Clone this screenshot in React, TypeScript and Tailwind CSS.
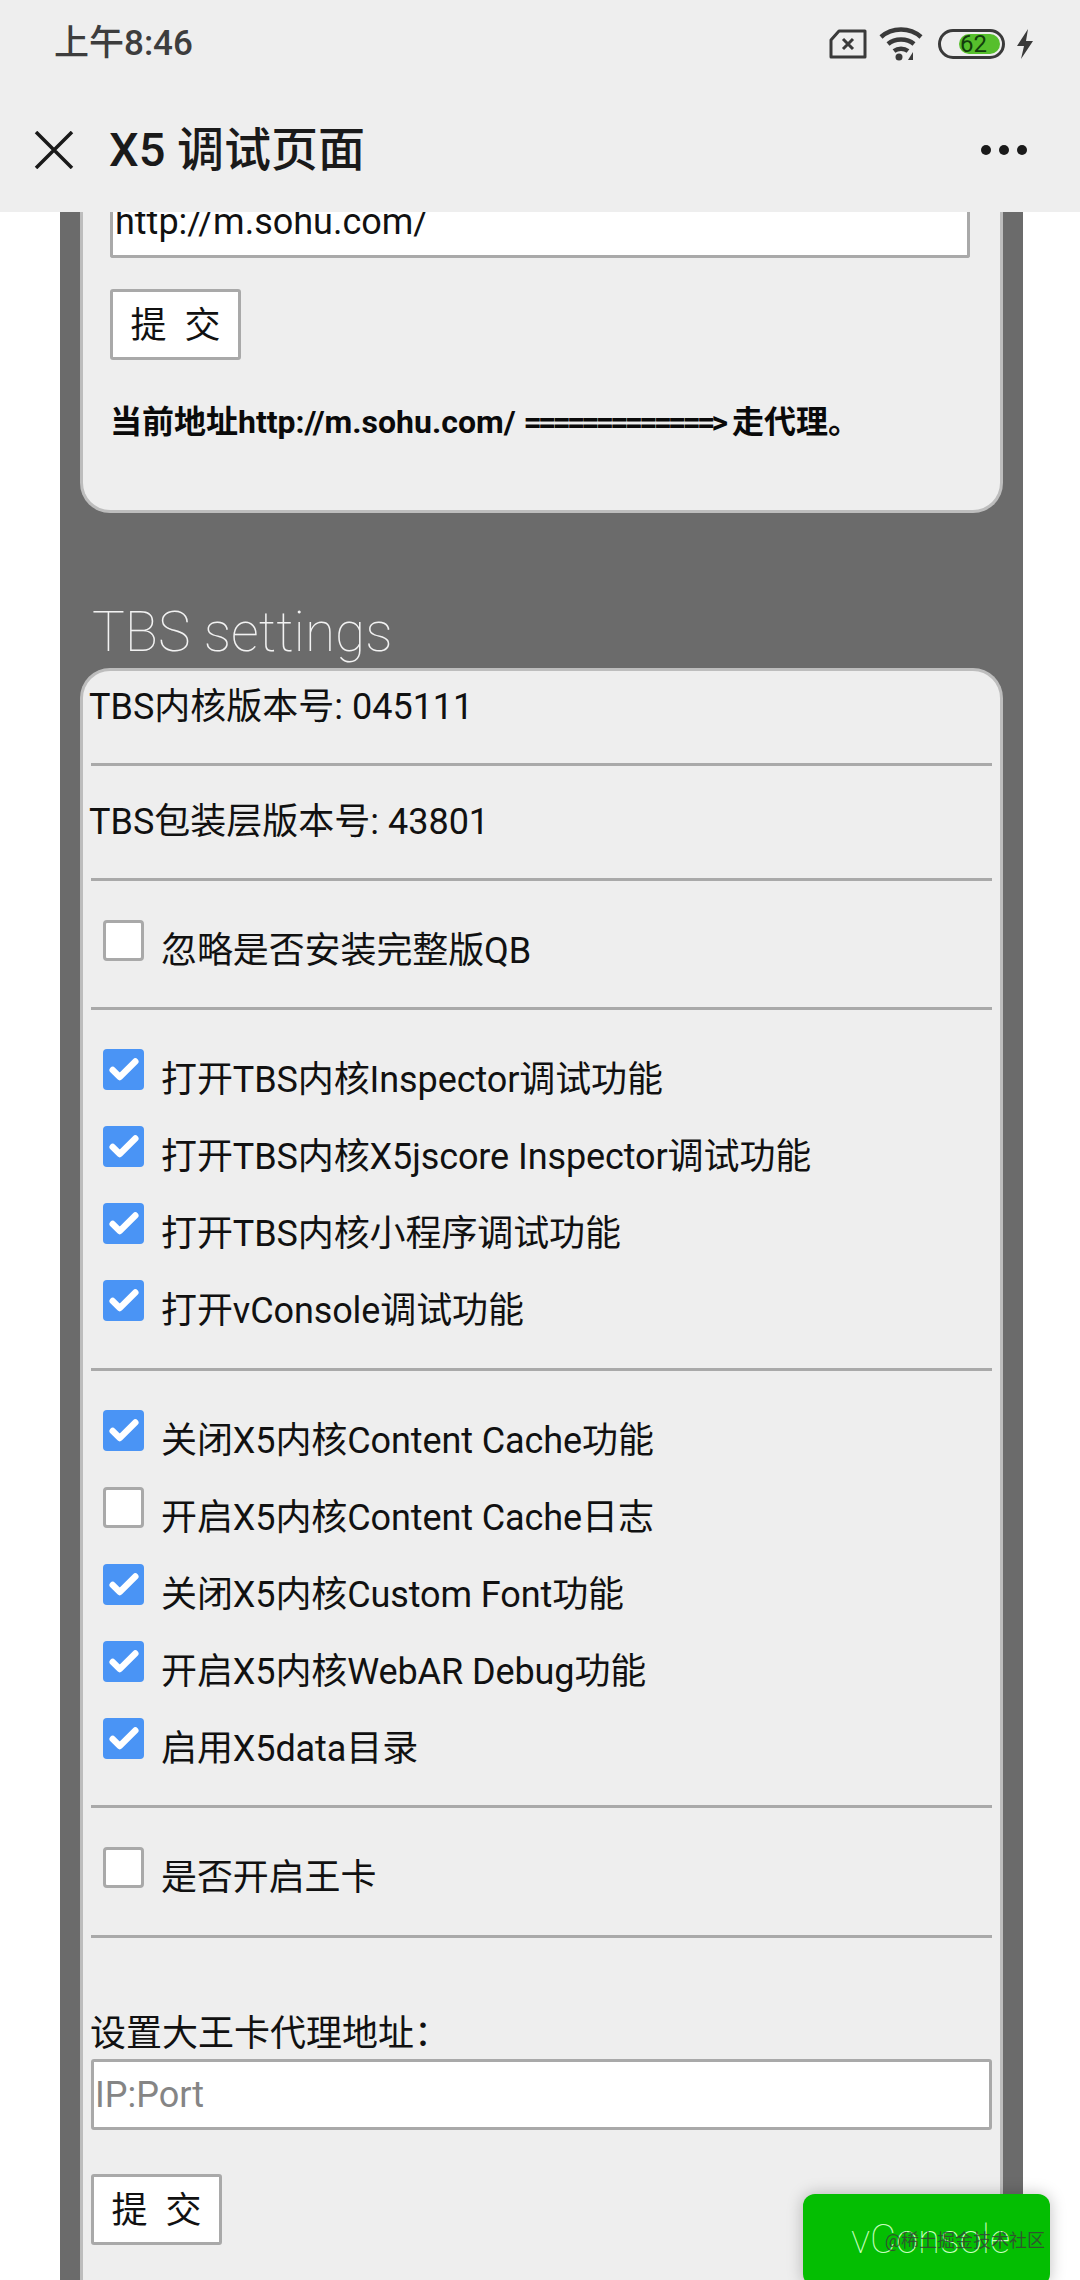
import { Check } from "lucide-react";

const fontStack = "[font-family:Roboto,'Noto_Sans_CJK_SC',sans-serif]";

const debugRows = [
    { label: '打开TBS内核Inspector调试功能', checked: true },
    { label: '打开TBS内核X5jscore Inspector调试功能', checked: true },
    { label: '打开TBS内核小程序调试功能', checked: true },
    { label: '打开vConsole调试功能', checked: true },
];

const x5Rows = [
    { label: '关闭X5内核Content Cache功能', checked: true },
    { label: '开启X5内核Content Cache日志', checked: false },
    { label: '关闭X5内核Custom Font功能', checked: true },
    { label: '开启X5内核WebAR Debug功能', checked: true },
    { label: '启用X5data目录', checked: true },
];

function CheckRow({ label, checked }: { label: string; checked: boolean }) {
    return (
        <div className="flex h-[77px] items-start pl-[12px]">
            {checked ? (
                <span className="flex h-[41px] w-[41px] shrink-0 items-center justify-center rounded-[4px] bg-[#4a94f5]">
                    <Check size={34} strokeWidth={4.5} className="text-white" />
                </span>
            ) : (
                <span className="h-[41px] w-[41px] shrink-0 rounded-[4px] border-[3px] border-[#a9a9a9] bg-white" />
            )}
            <span className="ml-[17px] mt-[7px] text-[36px] leading-[48px] tracking-[-0.1px] whitespace-nowrap text-[#111]">{label}</span>
        </div>
    );
}

function SubmitButton() {
    return (
        <button className="flex h-[71px] w-[131px] items-center justify-center gap-[18px] rounded-[3px] border-[3px] border-[#a9a9a9] bg-white pt-[2px] text-[36px] text-[#111]">
            <span>提</span>
            <span>交</span>
        </button>
    );
}

function Divider() {
    return <div className="h-[3px] bg-[#a9a9a9]" />;
}

function StatusIcons() {
    return (
        <div className="flex items-center">
            <svg width="38" height="30" viewBox="0 0 38 30" fill="none" stroke="#3a3a3a" strokeWidth="3">
                <path d="M2 11 10 2h26v26H2z" strokeLinejoin="round" />
                <path d="M14 10l10 10M24 10 14 20" />
            </svg>
            <svg width="44" height="36" viewBox="0 0 44 36" fill="none" stroke="#3a3a3a" strokeWidth="4.5" className="ml-[12px]">
                <path d="M2 11c11-10 29-10 40 0" />
                <path d="M9 18c7-6 19-6 26 0" />
                <path d="M15 25c4-3 10-3 14 0" />
                <circle cx="20" cy="31" r="3.5" fill="#3a3a3a" stroke="none" />
                <path d="M34 26v8h-5z" fill="#3a3a3a" stroke="none" />
            </svg>
            <div className="relative ml-[15px] flex h-[30px] w-[67px] items-center rounded-full border-[3px] border-[#3a3a3a] bg-[#eee]">
                <div className="absolute bottom-[2px] right-[2px] top-[2px] w-[41px] rounded-full bg-[#56bf2c]" />
                <span className="absolute left-[19px] text-[24px] leading-[24px] text-[#123d0c]">62</span>
            </div>
            <svg width="20" height="32" viewBox="0 0 20 32" fill="#3a3a3a" className="ml-[10px]">
                <path d="M13 1 2 18h7L6 31l12-18h-7z" />
            </svg>
        </div>
    );
}

export default function App() {
    return (
        <div className={`relative h-[2280px] w-[1080px] overflow-hidden bg-white ${fontStack}`}>
            {/* Status bar + title bar */}
            <header className="bg-[#eeeeee] h-[212px]">
                <div className="flex h-[88px] items-center justify-between pl-[54px] pr-[45px]">
                    <span className="text-[35px] font-medium text-[#3d3d3d]">上午8:46</span>
                    <StatusIcons />
                </div>
                <div className="flex h-[124px] items-center pl-[34px] pr-[53px]">
                    <svg width="40" height="38" viewBox="0 0 40 38" fill="none" stroke="#1a1a1a" strokeWidth="3.5">
                        <path d="M2 1l36 36M38 1 2 37" />
                    </svg>
                    <span className="ml-[35px] text-[47px] font-medium text-[#1a1a1a]">X5 调试页面</span>
                    <div className="ml-auto flex gap-[8px]">
                        <span className="h-[10px] w-[10px] rounded-full bg-[#1a1a1a]" />
                        <span className="h-[10px] w-[10px] rounded-full bg-[#1a1a1a]" />
                        <span className="h-[10px] w-[10px] rounded-full bg-[#1a1a1a]" />
                    </div>
                </div>
            </header>

            <main className="ml-[60px] mr-[57px] bg-[#6b6b6b] px-[20px] pb-[40px]">
                {/* Proxy card, scrolled under the title bar */}
                <section className="h-[301px] rounded-b-[30px] border-x-[3px] border-b-[3px] border-[#bdbdbd] bg-[#eeeeee] pl-[27px] pr-[30px]">
                    <div className="flex h-[46px] items-end rounded-b-[3px] border-x-[3px] border-b-[3px] border-[#a9a9a9] bg-white pl-[2px]">
                        <span className="block h-[43px] overflow-hidden text-[36px] leading-[20px] text-[#111]">http://m.sohu.com/</span>
                    </div>
                    <div className="mt-[31px]">
                        <SubmitButton />
                    </div>
                    <p className="mt-[40px] text-[32px] leading-[44px] font-bold whitespace-nowrap text-[#0a0a0a]">
                        当前地址http://m.sohu.com/ <span className="tracking-[-3.9px]">=============&gt;</span> 走代理。
                    </p>
                </section>

                <h2 className="mt-[83px] pl-[12px] text-[55px] leading-[72px] font-thin text-[#f2f2f2]">TBS settings</h2>

                <section className="rounded-t-[30px] border-x-[3px] border-t-[3px] border-[#bdbdbd] bg-[#eeeeee] px-[8px]">
                    <p className="h-[92px] pt-[12px] -ml-[2px] text-[36px] leading-[48px] text-[#111]">TBS内核版本号: 045111</p>
                    <Divider />
                    <p className="h-[112px] pt-[32px] -ml-[2px] text-[36px] leading-[48px] text-[#111]">TBS包装层版本号: 43801</p>
                    <Divider />
                    <div className="h-[126px] pt-[39px]">
                        <CheckRow label="忽略是否安装完整版QB" checked={false} />
                    </div>
                    <Divider />
                    <div className="h-[358px] pt-[39px]">
                        {debugRows.map((row) => (
                            <CheckRow key={row.label} label={row.label} checked={row.checked} />
                        ))}
                    </div>
                    <Divider />
                    <div className="h-[434px] pt-[39px]">
                        {x5Rows.map((row) => (
                            <CheckRow key={row.label} label={row.label} checked={row.checked} />
                        ))}
                    </div>
                    <Divider />
                    <div className="h-[127px] pt-[39px]">
                        <CheckRow label="是否开启王卡" checked={false} />
                    </div>
                    <Divider />
                    <p className="mt-[72px] -ml-[1px] text-[36px] leading-[48px] text-[#111]">设置大王卡代理地址：</p>
                    <input
                        placeholder="IP:Port"
                        className="mt-[1px] block h-[71px] w-full rounded-[3px] border-[3px] border-[#a9a9a9] bg-white pl-[1px] text-[36px] outline-none placeholder:text-[#858585]"
                    />
                    <div className="mt-[44px] pb-[60px]">
                        <SubmitButton />
                    </div>
                </section>
            </main>

            {/* vConsole floating button */}
            <div className="absolute bottom-[-6px] right-[30px] flex h-[92px] w-[247px] items-center rounded-[12px] bg-[#04be02] pl-[48px] shadow-[0_0_16px_rgba(0,0,0,0.25)]">
                <span className="text-[40px] font-thin text-[#c8ffc0]">vConsole</span>
            </div>
            <span className="absolute bottom-[26px] right-[35px] text-[18px] text-[#3a3a3a]/80">@稀土掘金技术社区</span>
        </div>
    );
}
